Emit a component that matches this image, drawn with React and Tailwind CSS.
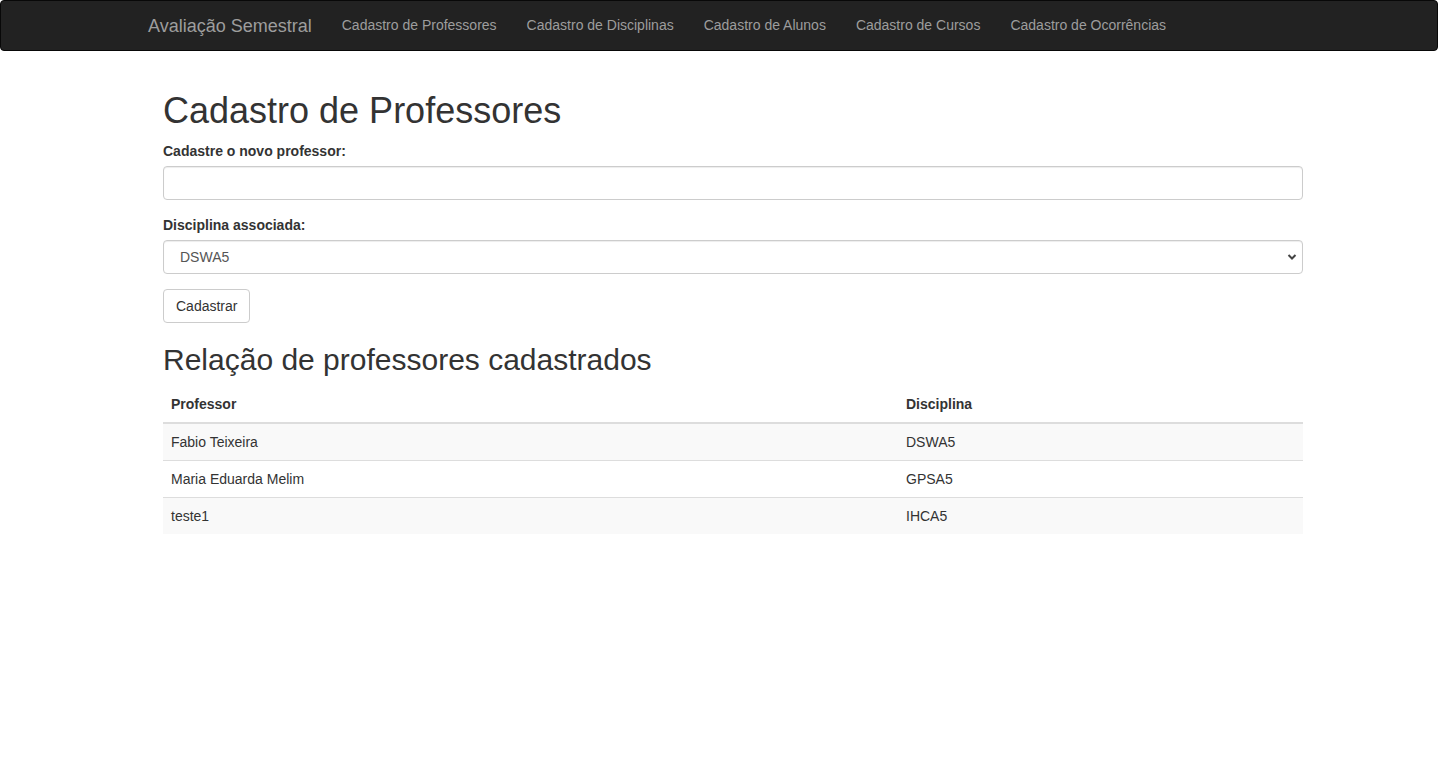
import React from 'react';

const links = [
  'Cadastro de Professores',
  'Cadastro de Disciplinas',
  'Cadastro de Alunos',
  'Cadastro de Cursos',
  'Cadastro de Ocorrências',
];

const rows = [
  ['Fabio Teixeira', 'DSWA5'],
  ['Maria Eduarda Melim', 'GPSA5'],
  ['teste1', 'IHCA5'],
];

const App = () => {
  return (
    <div className="min-h-[770px] bg-white text-[14px] leading-[20px] text-[#333]" style={{ fontFamily: '"Liberation Sans", Arial, sans-serif' }}>
      <nav className="h-[51px] bg-[#222] border border-[#080808] rounded-[4px]">
        <div className="flex items-start pl-[132px]">
          <a className="px-[15px] py-[15px] text-[18px] leading-[20px] text-[#9d9d9d]">Avaliação Semestral</a>
          {links.map((l) => (
            <a key={l} className="px-[15px] py-[14px] leading-[20px] text-[#9d9d9d]">{l}</a>
          ))}
        </div>
      </nav>

      <div className="ml-[163px] w-[1140px] pt-[20px]">
        <h1 className="mt-[20px] mb-[10px] text-[36px] leading-[39.6px] font-normal">Cadastro de Professores</h1>

        <div className="mb-[15px]">
          <label className="block mb-[5px] font-bold">Cadastre o novo professor:</label>
          <input
            type="text"
            className="block w-full h-[34px] px-[12px] py-[6px] border border-[#ccc] rounded-[4px] bg-white text-[#555] shadow-[inset_0_1px_1px_rgba(0,0,0,0.075)] outline-none"
          />
        </div>

        <div className="mb-[15px]">
          <label className="block mb-[5px] font-bold">Disciplina associada:</label>
          <div className="relative">
            <select className="block w-full h-[34px] pl-[16px] pr-[30px] border border-[#ccc] rounded-[4px] bg-white text-[#555] shadow-[inset_0_1px_1px_rgba(0,0,0,0.075)] appearance-none outline-none">
              <option>DSWA5</option>
              <option>GPSA5</option>
              <option>IHCA5</option>
            </select>
            <svg className="absolute right-[6px] top-[13px]" width="10" height="8" viewBox="0 0 10 8">
              <path d="M1.5 2 L5 5.5 L8.5 2" fill="none" stroke="#444" strokeWidth="2" />
            </svg>
          </div>
        </div>

        <button className="h-[34px] px-[12px] border border-[#ccc] rounded-[4px] bg-white text-[#333]">Cadastrar</button>

        <h2 className="mt-[20px] mb-[10px] text-[30px] leading-[33px] font-normal">Relação de professores cadastrados</h2>

        <table className="w-full border-collapse">
          <thead>
            <tr>
              <th className="w-[735px] p-[8px] text-left font-bold border-b-2 border-[#ddd]">Professor</th>
              <th className="p-[8px] text-left font-bold border-b-2 border-[#ddd]">Disciplina</th>
            </tr>
          </thead>
          <tbody>
            {rows.map(([p, d], i) => (
              <tr key={p} className={i % 2 === 0 ? 'bg-[#f9f9f9]' : ''}>
                <td className={`p-[8px] ${i > 0 ? 'border-t border-[#ddd]' : ''}`}>{p}</td>
                <td className={`p-[8px] ${i > 0 ? 'border-t border-[#ddd]' : ''}`}>{d}</td>
              </tr>
            ))}
          </tbody>
        </table>
      </div>
    </div>
  );
};

export default App;
